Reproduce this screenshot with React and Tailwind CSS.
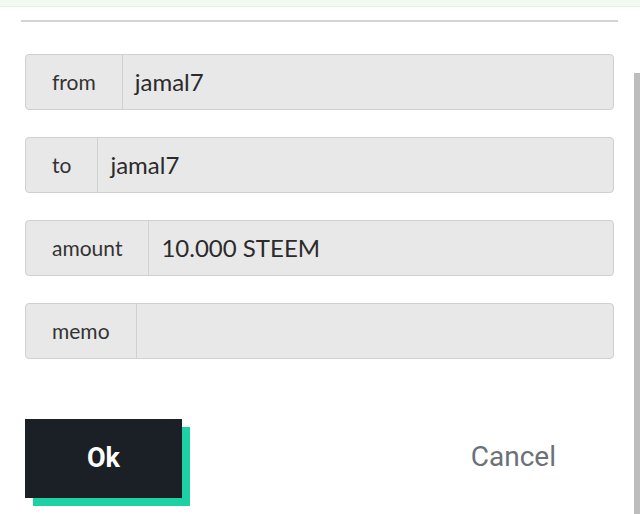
import React from 'react';

const fields = [
  { label: 'from', value: 'jamal7' },
  { label: 'to', value: 'jamal7' },
  { label: 'amount', value: '10.000 STEEM' },
  { label: 'memo', value: '' },
];

const Field = ({ label, value }) => (
  <div className="flex h-[56px] rounded-[4px] border border-[#d0d0d0] bg-[#e8e8e8]">
    <div className="flex items-center px-[26px] border-r border-[#d0d0d0] text-[21px] text-[#333]">
      {label}
    </div>
    <div className="flex flex-1 items-center px-[12px] text-[24px] text-[#2b2b2b]">
      {value}
    </div>
  </div>
);

const App = () => {
  return (
    <div
      className="relative w-[640px] h-[514px] overflow-hidden bg-white"
      style={{ fontFamily: 'Lato, "Noto Sans", sans-serif' }}
    >
      <div className="h-[7px] bg-[#f2faf2] border-b border-[#e3efe3]" />
      <div className="pl-[25px] pr-[26px]">
        <div className="mx-[-4px] mt-[13px] h-[2px] bg-[#d4d4d4]" />
        <div className="mt-[32px] flex flex-col gap-[27px]">
          {fields.map((f) => (
            <Field key={f.label} label={f.label} value={f.value} />
          ))}
        </div>
        <div className="mt-[60px] flex items-center justify-between">
          <div className="relative w-[165px] h-[87px]">
            <div className="absolute left-[8px] top-[8px] w-[157px] h-[79px] bg-[#1ed1a4]" />
            <button
              className="absolute left-0 top-0 w-[157px] h-[79px] bg-[#1b2026] text-white text-[27px] font-bold"
              style={{ fontFamily: 'Roboto, sans-serif' }}
            >
              Ok
            </button>
          </div>
          <button
            className="mr-[58px] mb-[12px] text-[28px] text-[#6b7177]"
            style={{ fontFamily: 'Roboto, sans-serif' }}
          >
            Cancel
          </button>
        </div>
      </div>
      <div className="absolute right-0 top-[73px] bottom-0 w-[6px] bg-[#bdbdbd]" />
    </div>
  );
};

export default App;
